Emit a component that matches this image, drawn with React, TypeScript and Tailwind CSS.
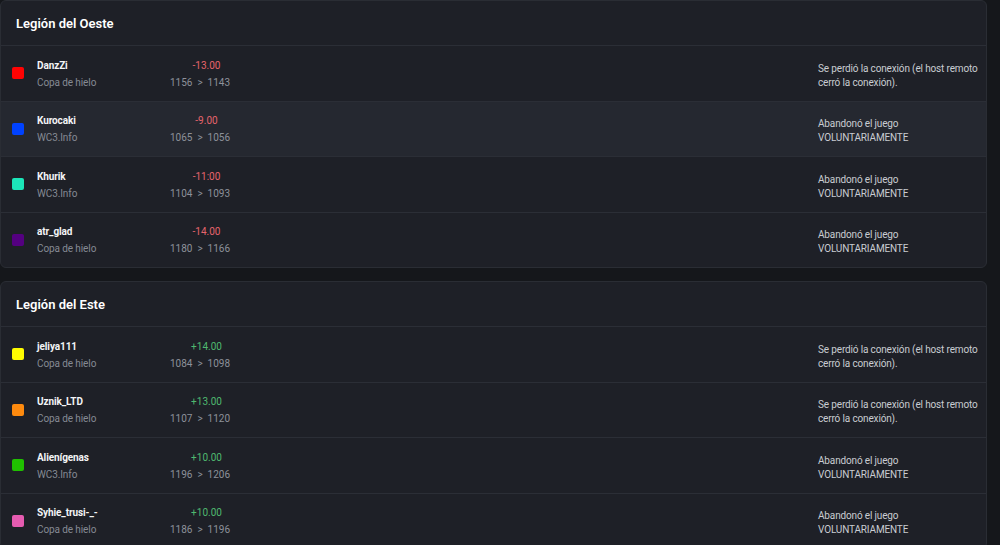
type Player = {
  name: string
  source: string
  color: string
  delta: string
  from: number
  to: number
  reason: [string, string]
  hover?: boolean
}

const lost: [string, string] = ['Se perdió la conexión (el host remoto', 'cerró la conexión).']
const quit: [string, string] = ['Abandonó el juego', 'VOLUNTARIAMENTE']

const west: Player[] = [
  { name: 'DanzZi', source: 'Copa de hielo', color: '#ff0303', delta: '-13.00', from: 1156, to: 1143, reason: lost },
  { name: 'Kurocaki', source: 'WC3.Info', color: '#0042ff', delta: '-9.00', from: 1065, to: 1056, reason: quit, hover: true },
  { name: 'Khurik', source: 'WC3.Info', color: '#1ce6b9', delta: '-11:00', from: 1104, to: 1093, reason: quit },
  { name: 'atr_glad', source: 'Copa de hielo', color: '#540081', delta: '-14.00', from: 1180, to: 1166, reason: quit },
]

const east: Player[] = [
  { name: 'jeliya111', source: 'Copa de hielo', color: '#fffc01', delta: '+14.00', from: 1084, to: 1098, reason: lost },
  { name: 'Uznik_LTD', source: 'Copa de hielo', color: '#fe8a0e', delta: '+13.00', from: 1107, to: 1120, reason: lost },
  { name: 'Alienígenas', source: 'WC3.Info', color: '#20c000', delta: '+10.00', from: 1196, to: 1206, reason: quit },
  { name: 'Syhie_trusi-_-', source: 'Copa de hielo', color: '#e55bb0', delta: '+10.00', from: 1186, to: 1196, reason: quit },
]

function Row({ p }: { p: Player }) {
  const up = p.delta.startsWith('+')
  return (
    <div
      className={`flex items-center h-[55.5px] border-t border-[#2b2e36] pl-[11px] ${
        p.hover ? 'bg-[#252830]' : ''
      }`}
    >
      <div className="w-3 h-3 rounded-[2px] shrink-0" style={{ backgroundColor: p.color }} />
      <div className="ml-[13px] w-[131px] flex flex-col gap-[3px] mt-[2px] tracking-[-0.1px]">
        <span className="text-[10px] leading-[14px] font-bold text-[#f3f4f6]">{p.name}</span>
        <span className="text-[10px] leading-[14px] text-[#858a94]">{p.source}</span>
      </div>
      <div className="w-[64px] flex flex-col items-center gap-[3px] mt-[2px]">
        <span className={`pl-[13px] text-[10px] leading-[14px] ${up ? 'text-[#4fb96f]' : 'text-[#e5646c]'}`}>
          {p.delta}
        </span>
        <span className="text-[10px] leading-[14px] text-[#8d919a] whitespace-nowrap">
          {p.from}
          <span className="mx-[5px]">&gt;</span>
          {p.to}
        </span>
      </div>
      <div className="ml-auto mt-[5px] w-[168px] text-[10px] leading-[14px] text-[#c9ccd2] whitespace-nowrap tracking-[-0.15px]">
        <div>{p.reason[0]}</div>
        <div>{p.reason[1]}</div>
      </div>
    </div>
  )
}

function Team({ title, players }: { title: string; players: Player[] }) {
  return (
    <section className="w-[987px] bg-[#1e2027] border border-[#2a2d34] rounded-md overflow-hidden">
      <div className="h-[44px] flex items-center pl-[15px] pt-[2px]">
        <h2 className="text-[13px] font-semibold text-white">{title}</h2>
      </div>
      {players.map((p) => (
        <Row key={p.name} p={p} />
      ))}
    </section>
  )
}

export default function App() {
  return (
    <div
      className="min-h-[545px] bg-[#15171b] flex flex-col gap-[13px] overflow-hidden"
      style={{ fontFamily: 'Roboto, "Noto Sans", sans-serif' }}
    >
      <Team title="Legión del Oeste" players={west} />
      <Team title="Legión del Este" players={east} />
    </div>
  )
}
